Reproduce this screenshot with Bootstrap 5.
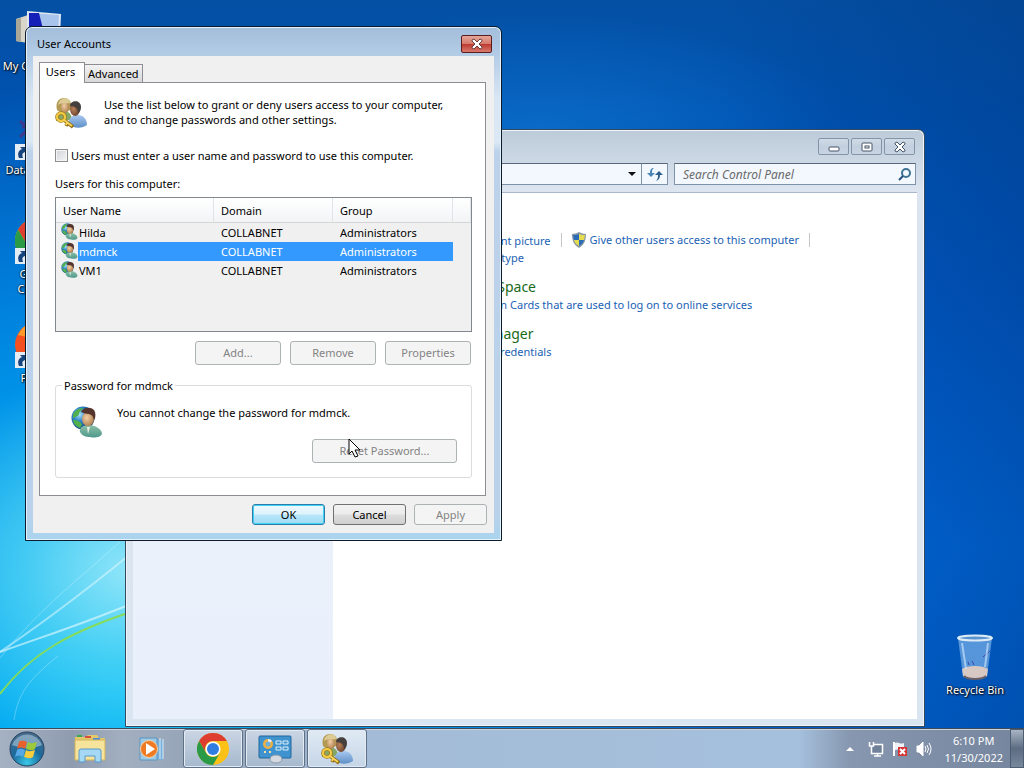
<!DOCTYPE html>
<html lang="en">
<head>
<meta charset="utf-8">
<meta name="viewport" content="width=device-width, initial-scale=1">
<title>User Accounts</title>
<link href="https://cdn.jsdelivr.net/npm/bootstrap@5.3.0/dist/css/bootstrap.min.css" rel="stylesheet">
<style>
body{font-family:"Noto Sans","Open Sans",sans-serif;font-size:11px;line-height:15px;color:#000}
button,input,table{font-size:inherit;line-height:inherit;font-family:inherit}
.workspace{background:
  radial-gradient(ellipse 240px 200px at 130px 570px,rgba(170,240,250,.85) 0,rgba(110,225,245,.6) 45%,rgba(40,190,240,0) 100%),
  radial-gradient(ellipse 620px 600px at 120px 680px,#00b8f6 0,rgba(0,160,238,.8) 50%,rgba(0,100,210,0) 100%),
  radial-gradient(ellipse 300px 120px at 540px 130px,rgba(20,130,220,.5) 0,rgba(20,120,210,0) 100%),
  linear-gradient(90deg,rgba(0,60,140,0) 70%,rgba(0,50,120,.35) 100%),
  linear-gradient(#0450a4 0,#0052b0 15%,#0058c4 40%,#006ade 75%,#0062d0 100%)}
.rays{left:0;bottom:0;z-index:0}
.shortcuts{width:76px;padding-top:9px;z-index:1}
.shortcut{height:104px;color:#fff;text-decoration:none;text-align:center;text-shadow:1px 1px 2px #000,0 0 2px #000;line-height:15px}
.shortcut svg{display:block;margin:0 auto 1px}
.recycle{right:6px;bottom:27px;width:86px;height:68px;z-index:1}
.explorer{left:125px;top:129px;width:800px;bottom:1px;z-index:2;background:linear-gradient(#bccbd9,#dbe4ef 60px,#d9e5f0);border:1px solid #34495e;border-radius:7px 7px 0 0;box-shadow:inset 0 0 0 1px #eef4fa}
.ex-title{height:33px;padding:8px 9px 0 0;gap:2px}
.cap{width:31px;height:17px;padding:0;border:1px solid #8494a8;border-radius:2px;background:linear-gradient(#d0dbe7,#c2cfde 50%,#c8d4e2);line-height:0}
.ex-bar{padding:0 8px;gap:6px}
.field{height:22px;background:#f3f8fe;border:1px solid #7f93a8;border-top-color:#56687a}
.field input{border:0;background:none;outline:0;padding:0;min-width:0}
.field input::placeholder{color:#6a6a6a;font-style:italic;opacity:1}
.seek{width:242px;font-size:12px}
.reload{width:26px;border-left:0}
.ex-body{margin:7px;background:#fff;border-top:1px solid #a9b8c8}
.ex-side{width:200px;background:linear-gradient(#eef3fb,#e9f0fb)}
.ex-main{padding:39px 0 0 67px}
.ex-main a{color:#1a62b4;text-decoration:none}
.ex-main h2{font-size:14px;line-height:20px;margin:12px 0 0;padding-left:3px;color:#1a6a1a;font-weight:400}
.task-links{gap:10px}
.retype{margin:2px 0 0 15px}
.rule{width:1px;height:14px;background:#c8c8c8}
.dialog{left:25px;top:26px;width:477px;z-index:3;padding:0 7px 7px;border:1px solid #0c1c2c;border-radius:7px 7px 0 0;background:linear-gradient(#a3bedb 0,#b3cce6 28px,#d8e5f4 70px,#dbe8f6 115px,#bcd2ea 125px,#b9d1ea 95%,#a9d4ee);box-shadow:inset 0 0 0 1px #e6f2fb}
.dlg-title{height:29px;padding:0 2px 0 4px}
.shut{width:31px;height:18px;padding:0;line-height:0;margin-top:4px;border:1px solid #5a1c1c;border-radius:2px;background:linear-gradient(#e5a698,#d67a6c 48%,#bd3a30 52%,#d97a6e)}
.dlg-body{background:#f0f0f0;padding:6px 7px 8px 6px}
.tabs{height:21px;margin-bottom:-1px;position:relative}
.tabs button{border:1px solid #8c8e94;padding:0 3px;height:19px;background:linear-gradient(#f2f2f2,#d8d8d8);margin-left:-1px}
.tabs .on{height:21px;width:46px;margin:0;padding:0 6px 3px 3px;border-bottom:0;background:#fff}
.pane{background:#fff;border:1px solid #8c8e94;padding:14px 13px 17px 15px;margin-right:1px}
.intro{gap:17px}
.must{margin-top:19px;gap:3px}
.tick{appearance:none;width:13px;height:13px;margin:0;border:1px solid #8e8f8f;border-radius:0;background:linear-gradient(135deg,#cfd3d8,#f6f6f6);box-shadow:inset 0 0 0 1px #f4f4f4}
.caption-line{margin:13px 0 6px}
.listbox{height:135px;background:#f0f0f0;border:1px solid #828790}
.listbox table{width:100%;table-layout:fixed;border-collapse:separate;border-spacing:0}
.c-user{width:158px}.c-dom{width:119px}.c-grp{width:120px}
.listbox th{height:25px;font-weight:400;padding:1px 0 0 7px;background:linear-gradient(#fff,#f3f4f6);border-right:1px solid #e0e3e8;border-bottom:1px solid #d5d5d5}
.listbox td{height:19px;padding:2px 0 0 7px;vertical-align:top}
.listbox td:first-child{padding:0 0 0 5px}
.listbox td svg{display:block}
.nm{height:19px;padding:2px 0 0 1px}
.sel td:not(:first-child):not(:last-child),.sel .nm{background:#3399ff;color:#fff}
.acts{gap:9px;margin-top:9px;padding-right:1px}
.pbtn{height:24px;padding:0 0 1px;border:1px solid #707070;border-radius:3px;background:linear-gradient(#f2f2f2,#ebebeb 48%,#dddddd 52%,#cfcfcf);color:#000}
.pbtn:disabled{background:#f4f4f4;border-color:#adb2b5;color:#838383}
.w86{width:86px}.w73{width:73px;height:21px}.w145{width:145px}
.dflt{border-color:#2c7ea8;background:linear-gradient(#eef9fd,#dff3fb 48%,#b8e6f8 52%,#9fdcf4);box-shadow:inset 0 0 0 1px #3fd0f5}
.group{border:1px solid #dcdcdc;border-radius:3px;padding:4px 14px 14px 15px;margin-top:13px}
.group legend{font-size:inherit;line-height:15px;float:none;width:auto;margin:0 0 0 -9px;padding:0 2px}
.gap-note{gap:14px}
.pointer{left:348px;top:438px;z-index:5}
.taskbar{height:40px;border-top:1px solid #3c4a5a;background:linear-gradient(90deg,#a4b2c4 0,#8f9caf 7%,#a2afc1 12%,#97a5b9 18%,#a3bbd6 36%,#a5c0dd 78%,#8697af 83%,#75859d 100%);box-shadow:inset 0 1px 0 #c9d3df;z-index:6}
.task{width:60px;height:39px;padding:0;border:1px solid #5f7187;border-radius:3px;background:linear-gradient(#cbd6e4,#a5b8cd);box-shadow:inset 0 0 0 1px #e2eaf3;margin-right:2px}
.task.active{background:linear-gradient(#e0eaf4,#c5d5e7)}
.quick{width:62px;height:39px;border:0;background:none;padding:0}
.orb-btn{width:59px;padding-right:4px}
.tray{gap:8px;padding-right:3px}
.clock{color:#fff;line-height:17px;text-align:center;padding:0 4px}
.peek{width:14px;height:39px;border:1px solid #4d5d72;padding:0;background:linear-gradient(#a8b4c4,#5d6c82 50%,#77879c)}
</style>
</head>
<body class="vh-100 overflow-hidden d-flex flex-column">
<svg width="0" height="0" class="position-absolute" aria-hidden="true">
<defs>
<radialGradient id="gGlobe" cx=".35" cy=".35" r=".7"><stop offset="0" stop-color="#a8e4f4"/><stop offset=".4" stop-color="#2f86cc"/><stop offset="1" stop-color="#0c3c74"/></radialGradient>
<radialGradient id="gSkin" cx=".4" cy=".4" r=".7"><stop offset="0" stop-color="#f2cfa4"/><stop offset="1" stop-color="#a87848"/></radialGradient>
<radialGradient id="gSkin2" cx=".35" cy=".5" r=".7"><stop offset="0" stop-color="#b98058"/><stop offset="1" stop-color="#5a3826"/></radialGradient>
<linearGradient id="gShirt" x2="0" y2="1"><stop stop-color="#a8c8ee"/><stop offset="1" stop-color="#5f90c8"/></linearGradient>
<linearGradient id="gTeal" x2="0" y2="1"><stop stop-color="#8cc0a8"/><stop offset="1" stop-color="#4f988c"/></linearGradient>
<symbol id="globeUser" viewBox="0 0 32 32">
<circle cx="12" cy="12" r="11.500" fill="url(#gGlobe)"/>
<path d="M2 8c3-5 7-6 10-6-1 3-4 3-4 6-1 3-4 2-6 5zM2 14c5 0 8 2 9 5l-2 3c-3-1-6-3-7-8z" fill="#4fb04c"/>
<path d="M9 26c-1-5 4-7 9-7 6 0 13 4 13 9-2 4-8 4-12 3-4 0-8-1-10-5z" fill="url(#gTeal)"/>
<path d="M16 21l1 7 2-7z" fill="#e8f0e0"/>
<ellipse cx="17" cy="13" rx="6" ry="7" fill="url(#gSkin)"/>
<path d="M10 6c2-5 12-6 14 0 1 4 0 7-1 8-1-4-2-5-5-6-3 0-5-1-8-2z" fill="#54342c"/>
</symbol>
<symbol id="usersKey" viewBox="0 0 32 32">
<path d="M1 24c-1-7 3-10 8-10 4 0 8 3 8 9z" fill="#86a866"/>
<path d="M2 13c-2-8 2-12 7-12 6 0 8 5 7 11-4 4-11 4-14 1z" fill="#b39a52"/>
<ellipse cx="10" cy="10" rx="4" ry="6" fill="url(#gSkin)"/>
<path d="M3 8c1-8 12-9 12-2-3 1-8-1-12 2z" fill="#dccb94"/>
<path d="M14 28c-1-7 3-10 9-10 5 0 9 4 9 10-4 3-12 4-18 0z" fill="url(#gShirt)"/>
<ellipse cx="20" cy="12" rx="5" ry="7" fill="url(#gSkin2)"/>
<path d="M15 9c0-6 11-7 11 1 0 3-1 5-3 6 0-4-2-7-8-7z" fill="#45403e"/>
<ellipse cx="6" cy="20" rx="4" ry="4" fill="none" stroke="#94690f" stroke-width="3.500"/>
<path d="M9 23l9 7M12 27l-1 2" stroke="#94690f" stroke-width="3.500"/>
<ellipse cx="6" cy="20" rx="4" ry="4" fill="none" stroke="#f0c945" stroke-width="2.400"/>
<path d="M9 23l8 6M12 26l-1 2" stroke="#f4d45c" stroke-width="2"/>
</symbol>
<symbol id="chrome" viewBox="0 0 32 32">
<circle cx="16" cy="16" r="16" fill="#fbc116"/>
<path d="M2.140 8A16 16 0 0 1 29.860 8H16a8 8 0 0 0-6.930 12z" fill="#dd3e30"/>
<path d="M2.140 8A16 16 0 0 0 16 32l6.930-12A8 8 0 0 1 9.070 20z" fill="#2b9a47"/>
<circle cx="16" cy="16" r="7.600" fill="#fff"/><circle cx="16" cy="16" r="6" fill="#2f7de1"/>
</symbol>
<symbol id="arrowBadge" viewBox="0 0 16 16"><path d="M0 0h16v16H0z" fill="#e4ecf4"/><path d="M4 14c-2-5 0-8 3-9L5 3h8v8l-3-3c-3 1-3 3-2 6z" fill="#16447e"/></symbol>
</defs>
</svg>

<main class="workspace flex-fill position-relative">
<svg class="rays position-absolute" width="240" height="220" viewBox="0 0 240 220" fill="none" aria-hidden="true">
<path d="M0 144C50 126 90 114 150 88" stroke="#e8fbff" stroke-width="2" opacity=".6"/>
<path d="M0 144C50 110 90 80 150 30" stroke="#e8fbff" stroke-width="2" opacity=".5"/>
<path d="M0 150C40 100 80 70 120 34M14 212c4-26 14-40 44-64" stroke="#e8fbff" opacity=".3"/>
<path d="M0 186C30 146 70 122 150 98" stroke="#86dc58" stroke-width="2"/>
</svg>

<nav class="shortcuts position-relative" aria-label="Desktop">
<a href="#" class="shortcut d-block"><svg width="48" height="48" viewBox="0 0 48 48"><path d="M2 10l12-4v28l-12-2z" fill="#d8d6c8"/><path d="M2 10l5-1v24l-5-1z" fill="#a9a898"/><path d="M13 2l34 3-1 24-33-4z" fill="#dfe8f2"/><path d="M15 4l30 2-1 20-29-3z" fill="#a8c4ec"/><path d="M15 4h10l5 20-15-2z" fill="#1420b8"/></svg>My Computer</a>
<a href="#" class="shortcut d-block"><svg width="48" height="48" viewBox="0 0 48 48"><path d="M6 8l20 18M24 6L6 24M8 14h30" stroke="#5a2c7c" stroke-width="3" opacity=".7"/><use href="#arrowBadge" x="1" y="31" width="16" height="16"/></svg>Database Kit</a>
<a href="#" class="shortcut d-block"><svg width="48" height="48" viewBox="0 0 48 48"><use href="#chrome" x="1" y="1" width="46" height="46"/><use href="#arrowBadge" x="1" y="31" width="16" height="16"/></svg>Google<br>Chrome</a>
<a href="#" class="shortcut d-block"><svg width="48" height="48" viewBox="0 0 48 48"><circle cx="24" cy="24" r="23" fill="#f4511e"/><path d="M4 14c4-8 8-10 14-12-6 8 2 10 4 16z" fill="#ff9a2a"/><use href="#arrowBadge" x="1" y="31" width="16" height="16"/></svg>Firefox</a>
</nav>

<section class="explorer position-absolute d-flex flex-column" aria-label="Control Panel">
<div class="ex-title d-flex justify-content-end">
<button class="cap" aria-label="Minimize"><svg width="14" height="12"><rect x="2" y="6" width="10" height="4" rx="1" fill="#fff" stroke="#465468"/></svg></button>
<button class="cap" aria-label="Maximize"><svg width="14" height="12"><rect x="2" y="2" width="10" height="8" rx="1" fill="#fff" stroke="#465468"/><rect x="5" y="5" width="4" height="2" fill="#fff" stroke="#465468"/></svg></button>
<button class="cap" aria-label="Close"><svg width="14" height="12"><path d="M2 2l2-1 3 3 3-3 2 1v1L9 6l3 3v1l-2 1-3-3-3 3-2-1V9l3-3-3-3z" fill="#fff" stroke="#465468"/></svg></button>
</div>
<div class="ex-bar d-flex">
<div class="d-flex flex-fill">
<div class="field flex-fill d-flex align-items-center justify-content-end pe-1"><svg width="10" height="8"><path d="M1 2h8l-4 4z" fill="#111"/></svg></div>
<button class="field reload p-0" aria-label="Refresh"><svg class="d-block mx-auto" width="16" height="16" viewBox="0 0 16 16"><path d="M7 2C4 2 3 4 3 7H0l4 4 4-4H5c0-2 0-4 2-5z" fill="#4a86b8"/><path d="M9 15c3-1 4-3 4-6h3l-4-4-4 4h3c0 2 0 4-2 6z" fill="#2f5f8c"/></svg></button>
</div>
<div class="field seek d-flex align-items-center ps-2 pe-1"><input class="flex-fill" type="search" placeholder="Search Control Panel" aria-label="Search Control Panel"><svg width="13" height="13" viewBox="0 0 13 13" fill="none"><circle cx="8" cy="5" r="4" stroke="#3d7396" stroke-width="2"/><path d="M5 8l-4 4" stroke="#28507c" stroke-width="2"/></svg></div>
</div>
<div class="ex-body flex-fill d-flex">
<div class="ex-side"></div>
<div class="ex-main flex-fill">
<div class="task-links d-flex align-items-center"><a class="ms-4 ps-1" href="#">Change account picture</a><span class="rule"></span><div class="d-flex"><svg class="me-1" width="14" height="16" viewBox="0 0 14 16"><path d="M7 0c2 1 5 2 7 2 0 7-2 11-7 14C2 13 0 9 0 2c2 0 5-1 7-2z" fill="#8a98a4"/><path d="M7 2v6H2L1 3c2 0 4 0 6-1z" fill="#2b6cb8"/><path d="M7 2v6h5l1-5c-2 0-4 0-6-1z" fill="#e4dc50"/><path d="M7 8v6c-3-2-4-3-5-6z" fill="#e4dc50"/><path d="M7 8v6c3-2 4-3 5-6z" fill="#2b6cb8"/></svg><a href="#">Give other users access to this computer</a></div><span class="rule"></span></div>
<div class="retype"><a href="#">Change account type</a></div>
<h2>Windows CardSpace</h2>
<div><a href="#">Manage Information Cards that are used to log on to online services</a></div>
<h2>Credential Manager</h2>
<div><a href="#">Manage Windows credentials</a></div>
</div>
</div>
</section>

<section class="dialog position-absolute" role="dialog" aria-labelledby="dlgTitle">
<header class="dlg-title d-flex align-items-center justify-content-between"><span id="dlgTitle" class="pt-1">User Accounts</span>
<button class="shut" aria-label="Close"><svg width="14" height="12"><path d="M2 2l2-1 3 3 3-3 2 1v1L9 6l3 3v1l-2 1-3-3-3 3-2-1V9l3-3-3-3z" fill="#fff" stroke="#6a4040"/></svg></button></header>
<div class="dlg-body">
<div class="tabs d-flex align-items-end" role="tablist"><button class="on" role="tab" aria-selected="true">Users</button><button role="tab">Advanced</button></div>
<div class="pane">
<div class="intro d-flex"><svg width="32" height="32"><use href="#usersKey" width="32" height="32"/></svg><p class="mb-0">Use the list below to grant or deny users access to your computer,<br>and to change passwords and other settings.</p></div>
<div class="must d-flex align-items-center"><input class="tick" type="checkbox" id="must"><label for="must">Users must enter a user name and password to use this computer.</label></div>
<p class="caption-line">Users for this computer:</p>
<div class="listbox">
<table>
<colgroup><col class="c-user"><col class="c-dom"><col class="c-grp"><col></colgroup>
<thead><tr><th>User Name</th><th>Domain</th><th>Group</th><th></th></tr></thead>
<tbody>
<tr><td><div class="d-flex"><svg width="17" height="17"><use href="#globeUser" width="17" height="17"/></svg><span class="nm flex-fill">Hilda</span></div></td><td>COLLABNET</td><td>Administrators</td><td></td></tr>
<tr class="sel"><td><div class="d-flex"><svg width="17" height="17"><use href="#globeUser" width="17" height="17"/></svg><span class="nm flex-fill">mdmck</span></div></td><td>COLLABNET</td><td>Administrators</td><td></td></tr>
<tr><td><div class="d-flex"><svg width="17" height="17"><use href="#globeUser" width="17" height="17"/></svg><span class="nm flex-fill">VM1</span></div></td><td>COLLABNET</td><td>Administrators</td><td></td></tr>
</tbody>
</table>
</div>
<div class="acts d-flex justify-content-end"><button class="pbtn w86" disabled>Add...</button><button class="pbtn w86" disabled>Remove</button><button class="pbtn w86" disabled>Properties</button></div>
<fieldset class="group"><legend>Password for mdmck</legend>
<div class="gap-note d-flex"><svg class="mt-2" width="32" height="34"><use href="#globeUser" width="32" height="34"/></svg><span class="pt-2">You cannot change the password for mdmck.</span></div>
<div class="text-end"><button class="pbtn w145" disabled>Reset Password...</button></div>
</fieldset>
</div>
<div class="d-flex justify-content-end gap-2 mt-2"><button class="pbtn w73 dflt">OK</button><button class="pbtn w73">Cancel</button><button class="pbtn w73" disabled>Apply</button></div>
</div>
</section>

<a href="#" class="shortcut recycle position-absolute d-block"><svg width="40" height="48" viewBox="0 0 40 48"><path d="M3 5l5 38c4 4 20 4 24 0l5-38z" fill="#8fc0ee" opacity=".6"/><path d="M7 36c6-4 20-4 26 0l-1 7c-4 4-20 4-24 0z" fill="#d8c8c4"/><path d="M9 43c4 4 18 4 22 0" fill="none" stroke="#6a6068" stroke-width="2"/><path d="M13 29l1 3M17 28l2 4M28 24l7-6" stroke="#3c48a8" fill="none"/><path d="M7 10l4 26M33 10l-3 24" stroke="#d8ecff" opacity=".6" stroke-width="2"/><ellipse cx="20" cy="5" rx="17" ry="2.500" fill="#5a94d0" stroke="#dcebf4" stroke-width="2"/></svg>Recycle Bin</a>

<svg class="pointer position-absolute" width="14" height="21" viewBox="0 0 14 21" aria-hidden="true"><path d="M1 1v15l3-3 3 6 3-1-3-6h5z" fill="#fff" stroke="#000"/></svg>
</main>

<footer class="taskbar d-flex">
<button class="quick orb-btn" aria-label="Start"><svg width="38" height="38" viewBox="0 0 38 38"><defs><radialGradient id="orb" cx=".5" cy=".9" r=".9"><stop stop-color="#38c8e8"/><stop offset=".5" stop-color="#1c6a9c"/><stop offset="1" stop-color="#4c6c8c"/></radialGradient></defs><circle cx="18" cy="19" r="17" fill="url(#orb)" stroke="#24405c"/><path d="M3 15A16 16 0 0 1 33 15c-8 4-20 4-30 0z" fill="#d8e6f0" opacity=".45"/><path d="M10 12c3-2 5-1 8 0l-2 7c-3-2-5-2-8 0z" fill="#e8602c"/><path d="M19 12c3 2 6 1 9 0l-2 7c-3 2-6 1-9 0z" fill="#9cc83c"/><path d="M8 20c3-2 5-1 8 0l-2 7c-3-2-5-2-8 0z" fill="#58a8e8"/><path d="M17 20c3 2 6 1 9 0l-2 7c-3 2-6 1-9 0z" fill="#f8cc3c"/></svg></button>
<button class="quick" aria-label="Windows Explorer"><svg width="34" height="32" viewBox="0 0 34 32"><path d="M2 4h11l2-2h9l2 3h6v22H2z" fill="#e4c86c"/><path d="M4 2h5v2H4z" fill="#3aa84c"/><path d="M12 3h6v2h-6z" fill="#d8503c"/><path d="M20 5h7v2h-7z" fill="#4c8cd0"/><path d="M2 7h30v20H2z" fill="#f6e49c" stroke="#d4b458"/><path d="M6 29V18q0-2 2-2h18q2 0 2 2v11h-6v-6H12v6z" fill="#a4d8f4" stroke="#5898c8"/></svg></button>
<button class="quick" aria-label="Windows Media Player"><svg width="32" height="30" viewBox="0 0 32 30"><path d="M14 5l13 1v20l-13-1z" fill="#78b0dc"/><path d="M24 4v21M27 5v20" stroke="#d8ecf8"/><path d="M4 4h17v22H4z" fill="#9ccbe8" stroke="#5c94c0"/><circle cx="13" cy="15" r="8.500" fill="#ee7a24" stroke="#f8d0a0"/><path d="M10 9l9 6-9 6z" fill="#fff"/></svg></button>
<button class="task" aria-label="Google Chrome"><svg width="32" height="32"><use href="#chrome" width="32" height="32"/></svg></button>
<button class="task" aria-label="Control Panel"><svg width="34" height="30" viewBox="0 0 34 30"><rect x="1" y="2" width="32" height="22" rx="1" fill="#3f93cf" stroke="#23669c"/><circle cx="10" cy="10" r="5" fill="#f0b040"/><path d="M10 10V5a5 5 0 0 1 4 2z" fill="#e6f2fa"/><circle cx="10" cy="10" r="2.500" fill="#6cb0dc"/><path d="M18 7h5v3h-5zM25 7h5v3h-5zM18 13h5v3h-5zM25 13h5v3h-5z" stroke="#dff0fb" fill="none"/><path d="M6 18h2M11 18h2" stroke="#f6e0a0" stroke-width="2"/><ellipse cx="18" cy="25" rx="6" ry="4" fill="#d4dae0" stroke="#8b98a6"/></svg></button>
<button class="task active" aria-label="User Accounts"><svg width="32" height="32"><use href="#usersKey" width="32" height="32"/></svg></button>
<div class="tray d-flex align-items-center ms-auto">
<svg width="12" height="8"><path d="M2 6h8l-4-4z" fill="#fff"/></svg>
<svg class="ms-1" width="16" height="16" viewBox="0 0 16 16" fill="none" stroke="#fff"><path d="M5.500 3.500h9v9h-11V9" fill="#6f8098" stroke-width="1.500"/><path d="M6 15h7M9.500 13v2M1.500 1v4h4V1M3.500 5v4" stroke-width="1.500"/></svg>
<svg width="16" height="16" viewBox="0 0 16 16"><path d="M2 1v14" stroke="#fff" stroke-width="2"/><path d="M3 2c4-2 4 2 9 0v7c-5 2-5-2-9 0z" fill="#eef2f6"/><path d="M6 6h9v9H6z" fill="#d63434"/><path d="M8 8l5 5M13 8l-5 5" stroke="#fff" stroke-width="2"/></svg>
<svg width="16" height="16" viewBox="0 0 16 16" fill="none" stroke="#fff"><path d="M1 5h2l4-4v14l-4-4H1z" fill="#fff"/><path d="M9 5q2 3 0 6M11 4q3 4 0 8M13 2q4 6 0 12"/></svg>
<div class="clock">6:10 PM<br>11/30/2022</div>
</div>
<button class="peek" aria-label="Show desktop"></button>
</footer>
<script src="https://cdn.jsdelivr.net/npm/bootstrap@5.3.0/dist/js/bootstrap.bundle.min.js"></script>
</body>
</html>
